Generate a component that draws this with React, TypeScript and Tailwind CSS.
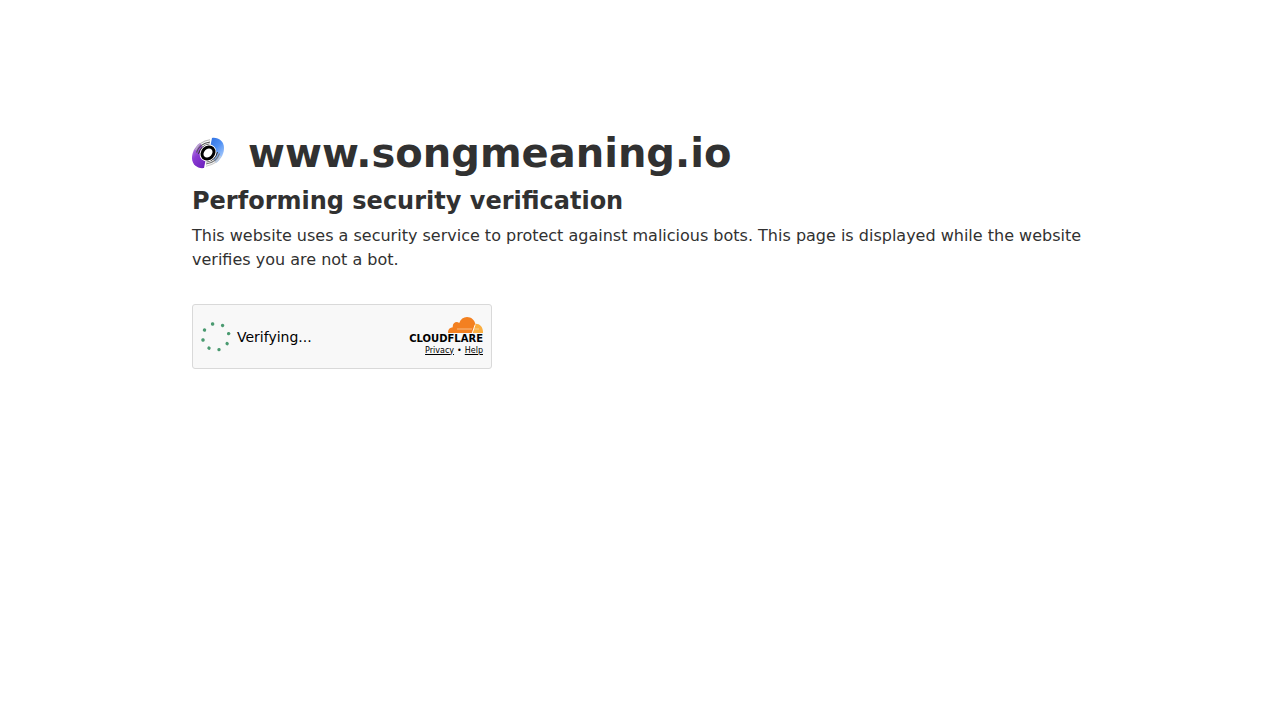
const dots = [0, 1, 2, 3, 4, 5, 6, 7];

const SiteIcon = () => (
    <svg viewBox="0 0 32 32" className="size-8" aria-hidden="true">
        <defs>
            <linearGradient id="blue" x1="0" y1="0" x2=".7" y2="1">
                <stop offset="0" stopColor="#2f6fe0" />
                <stop offset=".5" stopColor="#4f90f4" />
                <stop offset="1" stopColor="#b4d2fc" />
            </linearGradient>
            <linearGradient id="purple" x1="0" y1="0" x2=".7" y2="1">
                <stop offset="0" stopColor="#c9a0ee" />
                <stop offset=".5" stopColor="#8a3ad2" />
                <stop offset="1" stopColor="#6d22bd" />
            </linearGradient>
        </defs>
        <path d="M20 1C27 0 32.500 5 32 12C31.500 18 28.500 22.500 24 26L17 16Z" fill="url(#blue)" />
        <path d="M12 31C5 32 -.5 27 0 20C.5 14 3.500 9.500 8 6L15 16Z" fill="url(#purple)" />
        <g fill="none" strokeWidth="1.100">
            <path d="M3.500 13C6 7.500 11 4 18 2.800" stroke="#bbb" />
            <path d="M4.500 15.500C6.500 9.500 11 6 18 5" stroke="#555" />
            <path d="M6.500 17C8 11.500 12 8 17.500 7" stroke="#333" />
            <path d="M28.500 19C26 24.500 21 28 14 29.200" stroke="#ccc" />
            <path d="M27.500 16.500C25.500 22.500 21 26 14 27" stroke="#777" />
            <path d="M25.500 15C24 20.500 20 24 14.500 25" stroke="#333" />
        </g>
        <ellipse cx="16" cy="16" rx="9" ry="7.800" transform="rotate(-45 16 16)" fill="#fff" />
        <ellipse cx="16" cy="16" rx="6.600" ry="5.400" transform="rotate(-45 16 16)" fill="#fff" stroke="#000" strokeWidth="3" />
    </svg>
);

const Spinner = () => (
    <svg viewBox="0 0 30 30" className="size-[30px]" aria-hidden="true">
        <g fill="#4a9a70">
            {dots.map((i) => (
                <circle key={i} cx="14.800" cy="1.600" r="1.700" transform={`rotate(${-14 + i * 45} 14.800 14.800)`} />
            ))}
        </g>
    </svg>
);

const CloudLogo = () => (
    <svg viewBox="0 0 35 16" className="h-4 w-[35px]" aria-hidden="true">
        <path
            d="M0 16C-.3 12.500 1.800 10.500 4.800 10.200C4.200 6.300 8.300 3.600 11.200 6C12.500 2 15.500 0 19 0C23.200 0 26.500 2.800 27.200 6.800C27.300 9 26 11 25 16Z"
            fill="#f38020"
        />
        <path d="M27.200 6.800C32 6.500 35.300 10.500 35 16H24.500Z" fill="#faae40" />
        <path d="M9 12H24M25.500 12H31" stroke="#fde3c8" strokeWidth=".6" />
        <path d="M27.200 7.500L24.300 16" stroke="#fff" strokeWidth=".9" />
    </svg>
);

const App = () => {
    return (
        <div className="min-h-screen bg-white font-['DejaVu_Sans',sans-serif] text-[#313131]">
            <main className="mx-auto max-w-[960px] px-8 pt-32">
                <div className="flex items-center gap-6">
                    <SiteIcon />
                    <h1 className="text-[40px] leading-[50px] font-bold">www.songmeaning.io</h1>
                </div>
                <h2 className="mt-[5px] text-2xl leading-9 font-bold">Performing security verification</h2>
                <p className="mt-[5px] text-base leading-6">
                    This website uses a security service to protect against malicious bots. This page is displayed
                    while the website verifies you are not a bot.
                </p>

                {/* Verification widget */}
                <div className="mt-8 flex h-[65px] max-w-[300px] items-center justify-between rounded-[3px] border border-[#d9d9d9] bg-[#f8f8f8] px-2 text-black">
                    <div className="flex items-center gap-1.5" role="status">
                        <Spinner />
                        <span className="text-sm leading-5">Verifying...</span>
                    </div>
                    <div className="flex flex-col items-end">
                        <CloudLogo />
                        <span className="mt-px text-[10px] leading-[10px] font-bold">CLOUDFLARE</span>
                        <div className="mt-px flex gap-[3px] text-[8px] leading-3">
                            <a href="#privacy" className="underline">Privacy</a>
                            <span>•</span>
                            <a href="#help" className="underline">Help</a>
                        </div>
                    </div>
                </div>
            </main>
        </div>
    );
};

export default App;
